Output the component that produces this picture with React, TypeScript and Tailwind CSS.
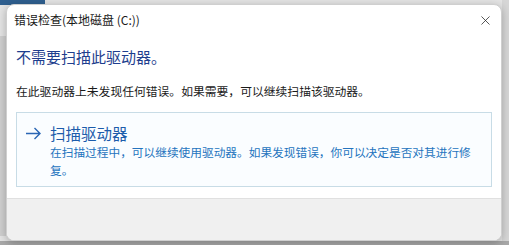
import { X } from "lucide-react";

const font = { fontFamily: '"Noto Sans CJK SC", "Noto Sans", sans-serif' };

export default function App() {
  return (
    <div
      className="relative h-[245px] w-[509px] overflow-hidden bg-[#e4e4e4] pl-[6px] pt-[4px]"
      style={font}
    >
      {/* window behind the dialog */}
      <div className="absolute left-0 top-0 h-[5px] w-[45px] bg-[#2f5f8f]" />
      <div className="absolute left-0 top-[36px] h-[200px] w-[6px] bg-[#cfcfcf]" />
      <div className="absolute right-0 top-0 h-[245px] w-[7px] bg-[#d6d6d6]" />
      <div className="absolute bottom-0 left-0 h-[4px] w-[509px] bg-[#a8a8a8]" />

      <div className="relative flex h-[237px] w-[496px] flex-col overflow-hidden rounded-lg border border-[#cfcfcf] bg-white shadow-[0_2px_8px_rgba(0,0,0,0.25)]">
        <div className="flex h-[30px] shrink-0 items-center justify-between pl-[7px] pr-[8px]">
          <span className="text-[12px] leading-none text-[#1a1a1a]">
            错误检查(本地磁盘 (C:))
          </span>
          <X size={15} strokeWidth={1.2} className="text-[#222]" />
        </div>

        <div className="flex flex-col px-[9px]">
          <h1 className="mt-[12px] text-[15px] leading-[20px] text-[#1e3e8e]">
            不需要扫描此驱动器。
          </h1>
          <p className="mt-[15px] text-[11.8px] leading-[18px] text-[#1a1a1a]">
            在此驱动器上未发现任何错误。如果需要，可以继续扫描该驱动器。
          </p>

          <div className="mt-[12px] flex h-[75px] gap-[8px] border border-[#c8dce6] bg-[#fafdff] pl-[8px] pr-[6px] pt-[10px]">
            <svg
              width="17"
              height="20"
              viewBox="0 0 17 20"
              fill="none"
              stroke="#2a66b4"
              strokeWidth="1.4"
              className="shrink-0"
            >
              <path d="M1 10.5h14M9.5 5l5.5 5.5-5.5 5.5" />
            </svg>
            <div className="flex flex-col">
              <span className="text-[15.5px] leading-[20px] text-[#1c5cab]">
                扫描驱动器
              </span>
              <span className="text-[11.7px] leading-[18px] text-[#2474be]">
                在扫描过程中，可以继续使用驱动器。如果发现错误，你可以决定是否对其进行修复。
              </span>
            </div>
          </div>
        </div>

        <div className="mt-[11px] flex-1 border-t border-[#e0e0e0] bg-[#f0f0f0]" />
      </div>
    </div>
  );
}
